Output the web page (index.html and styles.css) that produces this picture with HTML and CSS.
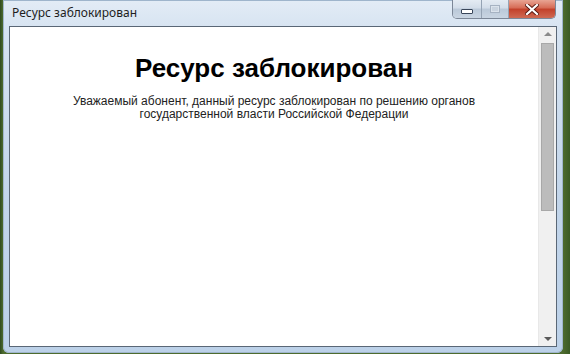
FILE: index.html
```html
<!DOCTYPE html>
<html lang="ru">
<head>
    <meta charset="UTF-8">
    <title>Ресурс заблокирован</title>
    <link rel="stylesheet" href="styles.css">
</head>
<body>

    <div class="window">
        <!-- Title bar -->
        <div class="titlebar">
            <span class="title">Ресурс заблокирован</span>
            <div class="controls">
                <div class="btn btn-min"><span class="min-glyph"></span></div>
                <div class="btn btn-max"><span class="max-glyph"></span></div>
                <div class="btn btn-close">
                    <svg width="14" height="11" viewBox="0 0 14 11">
                        <path d="M2 1 L12 10 M12 1 L2 10" stroke="#5a1a12" stroke-width="4" stroke-linecap="square"/>
                        <path d="M2 1 L12 10 M12 1 L2 10" stroke="#ffffff" stroke-width="2.2" stroke-linecap="square"/>
                    </svg>
                </div>
            </div>
        </div>

        <!-- Client area -->
        <div class="client">
            <div class="page">
                <h1>Ресурс заблокирован</h1>
                <p>Уважаемый абонент, данный ресурс заблокирован по решению органов государственной власти Российской Федерации</p>
            </div>
            <div class="scrollbar">
                <div class="arrow arrow-up"></div>
                <div class="thumb"></div>
                <div class="arrow arrow-down"></div>
            </div>
        </div>
    </div>

</body>
</html>
```

FILE: styles.css
```css
/* Desktop */
body {
    margin: 0;
    height: 354px;
    overflow: hidden;
    background: linear-gradient(90deg, #2f4a1f 0px, #4d6b2e 3px, #4d6b2e 563px, #3a5a24 570px);
    font-family: "Liberation Sans", Arial, sans-serif;
}

/* Window frame */
.window {
    margin-left: 3px;
    width: 560px;
    height: 353px;
    border-radius: 0 0 6px 6px;
    background: linear-gradient(180deg, #e3ecf6 0px, #d6e3f1 30px, #c2d5ea 200px, #bcd1e8 353px);
    box-shadow: inset 0 0 0 1px #9fb5cc;
    display: flex;
    flex-direction: column;
}

.titlebar {
    height: 26px;
    display: flex;
    justify-content: space-between;
    align-items: flex-start;
}

.title {
    font-family: "Noto Sans", "Open Sans", sans-serif;
    font-size: 12px;
    color: #1e1e1e;
    padding: 5px 0 0 9px;
    line-height: 16px;
}

.controls {
    display: flex;
    margin-right: 7px;
    height: 18px;
    border: 1px solid #7c8797;
    border-top: none;
    border-radius: 0 0 5px 5px;
    overflow: hidden;
}

.btn {
    height: 18px;
    display: flex;
    align-items: center;
    justify-content: center;
}

.btn-min,
.btn-max {
    width: 26px;
    background: linear-gradient(180deg, #e4ebf3 0%, #d3dde9 45%, #bac8d8 50%, #c9d5e2 100%);
    border-right: 1px solid #95a3b4;
}

.btn-min {
    width: 28px;
}

.min-glyph {
    width: 10px;
    height: 3px;
    margin-top: 4px;
    background: #ffffff;
    border: 1px solid #39465a;
    border-radius: 1px;
}

.max-glyph {
    width: 8px;
    height: 6px;
    border: 1px solid #a6b2c2;
    box-shadow: inset 0 0 0 1px #dbe3ec;
    background: #c9d3df;
}

.btn-close {
    width: 46px;
    background: linear-gradient(180deg, #e8a493 0%, #d66a54 45%, #c2402a 50%, #cf6a53 100%);
}

/* Client area */
.client {
    flex: 1;
    margin: 0 6px 6px 6px;
    border: 1px solid #5a6776;
    background: #ffffff;
    display: flex;
}

.page {
    flex: 1;
    text-align: center;
    padding: 0 30px;
}

h1 {
    font-size: 26px;
    font-weight: bold;
    color: #000000;
    margin: 26px 0 12px;
    line-height: 30px;
}

.page p {
    font-size: 12px;
    color: #222222;
    line-height: 13px;
    margin: 0;
    padding: 0 20px;
}

/* Scrollbar */
.scrollbar {
    width: 17px;
    background: #f0f0f0;
    border-left: 1px solid #e8e8e8;
    display: flex;
    flex-direction: column;
    align-items: center;
}

.arrow {
    width: 0;
    height: 0;
    border-left: 4px solid transparent;
    border-right: 4px solid transparent;
}

.arrow-up {
    margin-top: 5px;
    border-bottom: 4px solid #8a8a8a;
}

.arrow-down {
    margin-top: auto;
    margin-bottom: 5px;
    border-top: 4px solid #5a5a5a;
}

.thumb {
    width: 13px;
    height: 168px;
    margin-top: 7px;
    background: #bcbcbc;
    border: 1px solid #a8a8a8;
    box-sizing: border-box;
}
```
